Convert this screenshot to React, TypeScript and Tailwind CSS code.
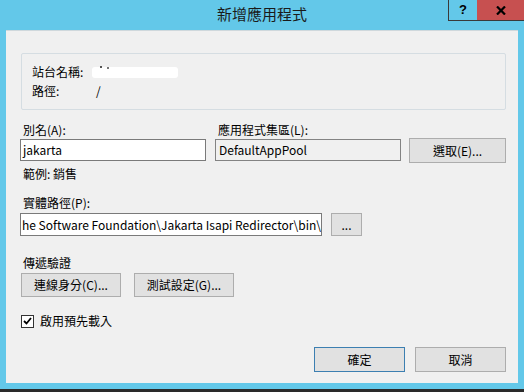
import React from "react";

const font = { fontFamily: "'Noto Sans CJK TC', 'Noto Sans', sans-serif" };

function Btn({ children, w, h = 24, blue = false }: { children: React.ReactNode; w: number; h?: number; blue?: boolean }) {
  return (
    <div
      className={`flex items-center justify-center bg-[#e1e1e1] border text-[12px] text-black ${blue ? "border-[#3c7fb1]" : "border-[#adadad]"}`}
      style={{ width: w, height: h }}
    >
      {children}
    </div>
  );
}

export default function App() {
  return (
    <div className="relative w-[524px] h-[392px] bg-[#63c8e9] overflow-hidden flex flex-col" style={font}>
      {/* title bar */}
      <div className="h-[30px] flex items-center justify-center text-[15px] text-[#1a1a1a] pb-[1px]">新增應用程式</div>
      <div className="absolute top-0 left-[448px] w-[29px] h-[21px] border-l border-b border-[#3a3a3a] flex items-center justify-center text-[13px] font-bold text-black" style={{ fontFamily: "'Liberation Sans', sans-serif" }}>?</div>
      <div className="absolute top-0 left-[477px] w-[47px] h-[21px] bg-[#c75050] border-b border-[#3a3a3a] flex items-center justify-center">
        <svg width="10" height="9" viewBox="0 0 10 9">
          <path d="M1 0.5 L9 8.5 M9 0.5 L1 8.5" stroke="#000" strokeWidth="2.2" />
        </svg>
      </div>

      {/* client area */}
      <div className="ml-[6px] w-[512px] h-[353px] bg-[#f0f0f0] border-t border-[#cfd8dc] flex flex-col text-[12px] text-black">
        {/* group box */}
        <div className="ml-[15px] mt-[22px] w-[485px] h-[57px] border border-[#d5dde2] rounded-[2px] flex flex-col pl-[10px] pt-[9px]">
          <div className="flex items-center h-[18px]">
            <span className="w-[60px]">站台名稱:</span>
            <div className="relative w-[86px] h-[11px] bg-white rounded-[3px] blur-[0.6px]">
              <div className="absolute left-[8px] -top-[1px] w-[2px] h-[2px] bg-[#555]" />
              <div className="absolute left-[15px] top-[0px] w-[2px] h-[2px] bg-[#777]" />
            </div>
          </div>
          <div className="flex items-center h-[18px] mt-[1px]">
            <span className="w-[64px]">路徑:</span>
            <span>/</span>
          </div>
        </div>

        {/* alias / pool */}
        <div className="flex ml-[14px] mt-[11px]">
          <div className="flex flex-col w-[195px]">
            <div className="h-[18px] flex items-center ml-[3px]">別名(A):</div>
            <div className="w-[186px] h-[22px] bg-white border border-[#7a7a7a] flex items-center px-[2px]">jakarta</div>
          </div>
          <div className="flex flex-col w-[194px]">
            <div className="h-[18px] flex items-center ml-[3px]">應用程式集區(L):</div>
            <div className="w-[186px] h-[22px] bg-[#f0f0f0] border border-[#838383] flex items-center px-[3px]">DefaultAppPool</div>
          </div>
          <div className="flex flex-col">
            <div className="h-[17px]" />
            <Btn w={97} h={25}>選取(E)...</Btn>
          </div>
        </div>
        <div className="ml-[17px] mt-[2px] h-[18px] flex items-center">範例: 銷售</div>

        {/* physical path */}
        <div className="ml-[17px] mt-[11px] h-[18px] flex items-center">實體路徑(P):</div>
        <div className="flex ml-[14px] mt-[1px] items-center">
          <div className="w-[302px] h-[23px] bg-white border border-[#7a7a7a] flex items-center pl-[1px] overflow-hidden whitespace-nowrap">
            <span>he Software Foundation\Jakarta Isapi Redirector\bin\</span>
          </div>
          <div className="ml-[9px]">
            <Btn w={31} h={23}>...</Btn>
          </div>
        </div>

        {/* pass-through auth */}
        <div className="ml-[17px] mt-[18px] h-[18px] flex items-center">傳遞驗證</div>
        <div className="flex ml-[15px] mt-[1px] gap-[13px]">
          <Btn w={100}>連線身分(C)...</Btn>
          <Btn w={100}>測試設定(G)...</Btn>
        </div>

        {/* checkbox */}
        <div className="flex items-center ml-[15px] mt-[15px]">
          <div className="w-[13px] h-[13px] bg-white border border-[#333] flex items-center justify-center">
            <svg width="9" height="8" viewBox="0 0 9 8">
              <path d="M1 4 L3.5 6.5 L8 1" stroke="#000" strokeWidth="1.8" fill="none" />
            </svg>
          </div>
          <span className="ml-[6px]">啟用預先載入</span>
        </div>

        {/* ok / cancel */}
        <div className="flex justify-end mr-[12px] mt-[17px] gap-[10px]">
          <Btn w={91} h={25} blue>確定</Btn>
          <Btn w={91} h={25}>取消</Btn>
        </div>
      </div>
      <div className="h-[6px]" />
      <div className="h-[3px] bg-[#2a2a2a]" />
    </div>
  );
}
